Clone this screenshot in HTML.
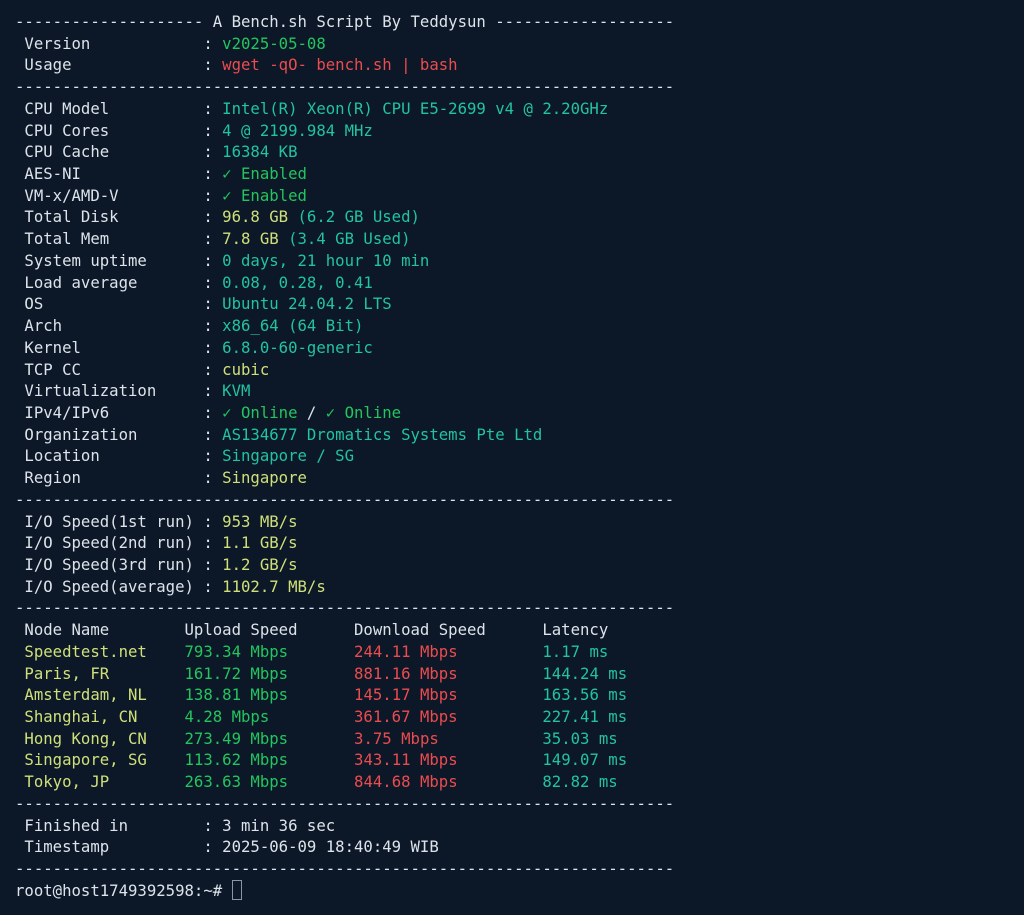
<!DOCTYPE html>
<html><head><meta charset="utf-8"><style>
html,body{margin:0;padding:0;background:#0c1727;width:1024px;height:915px;overflow:hidden}
pre{position:absolute;left:15px;top:11px;margin:0;font-family:"DejaVu Sans Mono","Liberation Mono",monospace;font-size:15.65px;line-height:21.72px;color:#dce3ea}
.g{color:#23c55e}.r{color:#ea4c4f}.t{color:#22c3a0}.y{color:#cfe07a}
.cur{display:inline-block;width:8px;height:18px;border:1px solid #8a96a3;vertical-align:-4px}
</style></head><body><pre>-------------------- A Bench.sh Script By Teddysun -------------------
 Version            : <span class="g">v2025-05-08</span>
 Usage              : <span class="r">wget -qO- bench.sh | bash</span>
----------------------------------------------------------------------
 CPU Model          : <span class="t">Intel(R) Xeon(R) CPU E5-2699 v4 @ 2.20GHz</span>
 CPU Cores          : <span class="t">4 @ 2199.984 MHz</span>
 CPU Cache          : <span class="t">16384 KB</span>
 AES-NI             : <span class="g">✓ Enabled</span>
 VM-x/AMD-V         : <span class="g">✓ Enabled</span>
 Total Disk         : <span class="y">96.8 GB</span> <span class="t">(6.2 GB Used)</span>
 Total Mem          : <span class="y">7.8 GB</span> <span class="t">(3.4 GB Used)</span>
 System uptime      : <span class="t">0 days, 21 hour 10 min</span>
 Load average       : <span class="t">0.08, 0.28, 0.41</span>
 OS                 : <span class="t">Ubuntu 24.04.2 LTS</span>
 Arch               : <span class="t">x86_64 (64 Bit)</span>
 Kernel             : <span class="t">6.8.0-60-generic</span>
 TCP CC             : <span class="y">cubic</span>
 Virtualization     : <span class="t">KVM</span>
 IPv4/IPv6          : <span class="g">✓ Online</span> / <span class="g">✓ Online</span>
 Organization       : <span class="t">AS134677 Dromatics Systems Pte Ltd</span>
 Location           : <span class="t">Singapore / SG</span>
 Region             : <span class="y">Singapore</span>
----------------------------------------------------------------------
 I/O Speed(1st run) : <span class="y">953 MB/s</span>
 I/O Speed(2nd run) : <span class="y">1.1 GB/s</span>
 I/O Speed(3rd run) : <span class="y">1.2 GB/s</span>
 I/O Speed(average) : <span class="y">1102.7 MB/s</span>
----------------------------------------------------------------------
 Node Name        Upload Speed      Download Speed      Latency
 <span class="y">Speedtest.net</span>    <span class="g">793.34 Mbps</span>       <span class="r">244.11 Mbps</span>         <span class="t">1.17 ms</span>
 <span class="y">Paris, FR</span>        <span class="g">161.72 Mbps</span>       <span class="r">881.16 Mbps</span>         <span class="t">144.24 ms</span>
 <span class="y">Amsterdam, NL</span>    <span class="g">138.81 Mbps</span>       <span class="r">145.17 Mbps</span>         <span class="t">163.56 ms</span>
 <span class="y">Shanghai, CN</span>     <span class="g">4.28 Mbps</span>         <span class="r">361.67 Mbps</span>         <span class="t">227.41 ms</span>
 <span class="y">Hong Kong, CN</span>    <span class="g">273.49 Mbps</span>       <span class="r">3.75 Mbps</span>           <span class="t">35.03 ms</span>
 <span class="y">Singapore, SG</span>    <span class="g">113.62 Mbps</span>       <span class="r">343.11 Mbps</span>         <span class="t">149.07 ms</span>
 <span class="y">Tokyo, JP</span>        <span class="g">263.63 Mbps</span>       <span class="r">844.68 Mbps</span>         <span class="t">82.82 ms</span>
----------------------------------------------------------------------
 Finished in        : 3 min 36 sec
 Timestamp          : 2025-06-09 18:40:49 WIB
----------------------------------------------------------------------
root@host1749392598:~# <span class="cur"></span></pre></body></html>
